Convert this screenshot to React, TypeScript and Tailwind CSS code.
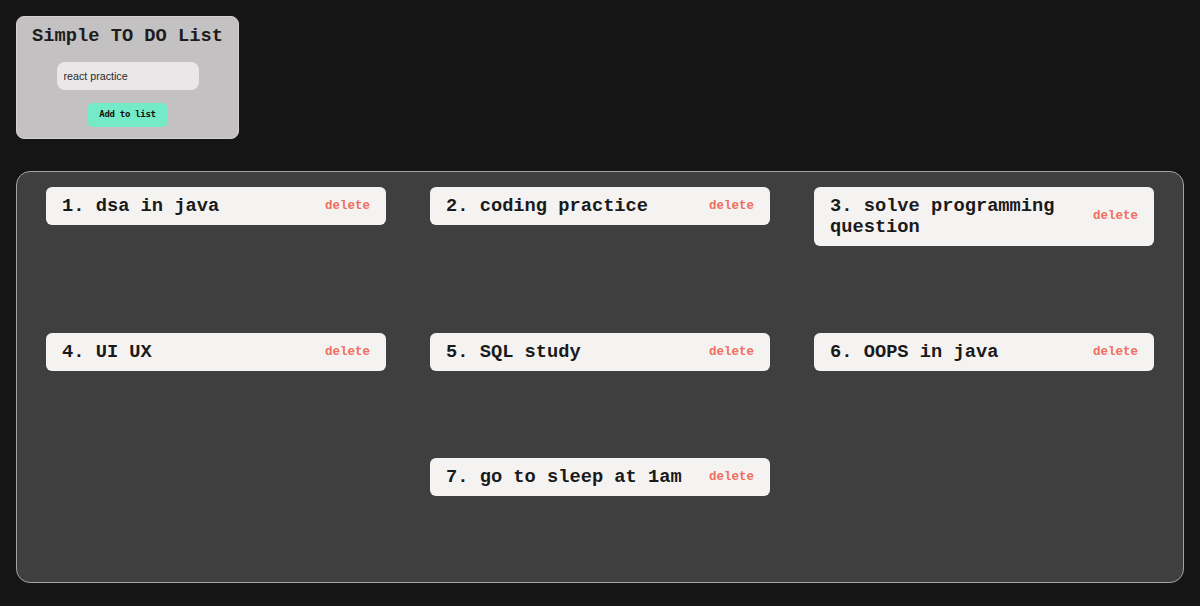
import React from "react";

const items = [
  "dsa in java",
  "coding practice",
  "solve programming question",
  "UI UX",
  "SQL study",
  "OOPS in java",
  "go to sleep at 1am",
];

export default function App() {
  return (
    <div className="min-h-[606px] w-[1200px] bg-[#151515] pt-4 pb-[24px] px-4">
      <div className="w-[223px] rounded-lg border border-[#d3d1d1] bg-[#c3c1c1] pt-[9px] pb-[11px] flex flex-col items-center">
        <h3
          className="text-[18.72px] font-bold text-[#1c1c1c] leading-[21px]"
          style={{ fontFamily: '"Liberation Mono", "Courier New", monospace' }}
        >
          Simple TO DO List
        </h3>
        <input
          className="mt-[15px] h-[28px] w-[142px] rounded-lg bg-[#e9e7e7] pl-[7px] text-[10.7px] text-[#2a2a2a] outline-none"
          style={{ fontFamily: '"Liberation Sans", Arial, sans-serif' }}
          defaultValue="react practice"
        />
        <button
          className="mt-[13px] h-[24px] w-[81px] rounded-md bg-[#74ebc6] text-[9px] font-bold tracking-[-0.3px] text-[#111]"
          style={{ fontFamily: '"DejaVu Sans Mono", monospace' }}
        >
          Add to list
        </button>
      </div>

      <div className="mt-[32px] rounded-[14px] border border-[#a3a3a3] bg-[#3f3f3f] px-[29px] pt-[15px] pb-[86px]">
        <div className="grid grid-cols-3 gap-x-[44px] gap-y-[87px] items-start">
          {items.map((t, i) => (
            <div
              key={i}
              className={`flex items-center justify-between gap-6 rounded-md bg-[#f5f3f2] pl-4 pr-4 py-[8.5px] ${i === 6 ? "col-start-2" : ""}`}
            >
              <span
                className="text-[18.72px] font-bold leading-[21px] text-[#1a1a1a]"
                style={{ fontFamily: '"Liberation Mono", "Courier New", monospace' }}
              >
                {i + 1}. {t}
              </span>
              <span
                className="shrink-0 text-[12.5px] font-bold text-[#f06e5e]"
                style={{ fontFamily: '"Liberation Mono", "Courier New", monospace' }}
              >
                delete
              </span>
            </div>
          ))}
        </div>
      </div>
    </div>
  );
}
